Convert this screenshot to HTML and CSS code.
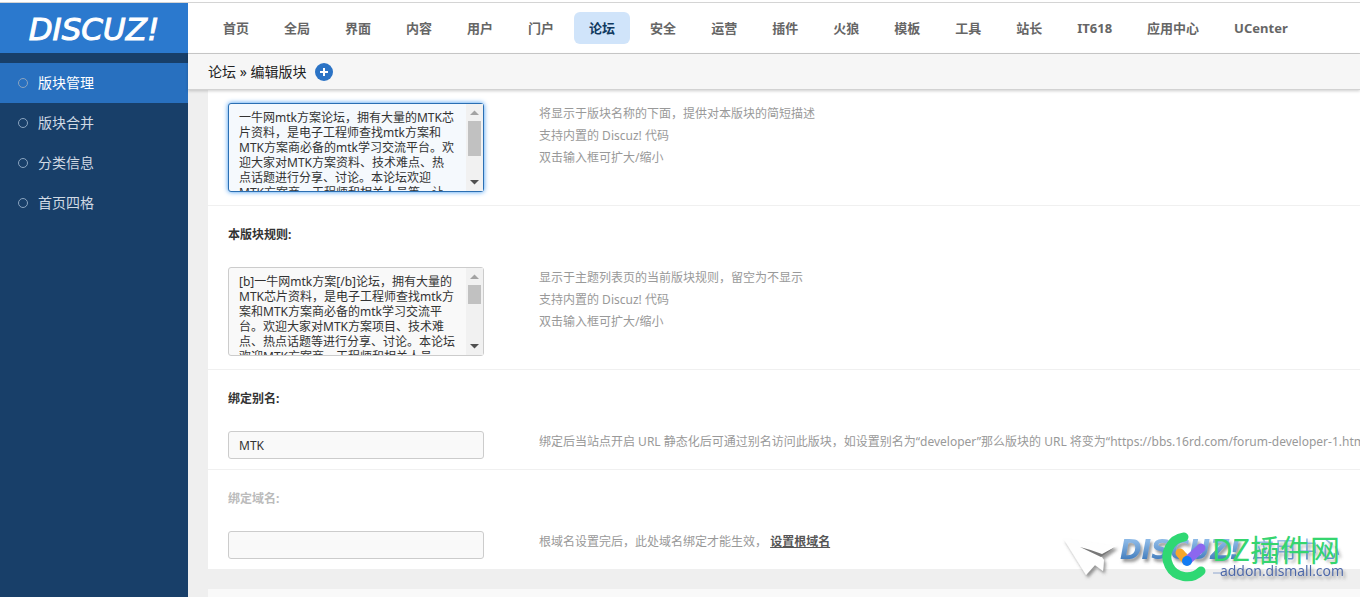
FILE: index.html
```html
<!DOCTYPE html>
<html lang="zh-CN">
<head>
<meta charset="utf-8">
<meta name="viewport" content="width=device-width, initial-scale=1">
<title>论坛 - 编辑版块</title>
<link rel="stylesheet" href="styles.css">
</head>
<body>
<div class="app">
  <aside class="sidebar">
    <a class="logo" href="#">DISCUZ!</a>
    <nav class="side-menu" aria-label="版块">
      <a class="side-link side-link-active" href="#">版块管理</a>
      <a class="side-link" href="#">版块合并</a>
      <a class="side-link" href="#">分类信息</a>
      <a class="side-link" href="#">首页四格</a>
    </nav>
  </aside>
  <div class="main">
    <nav class="top-nav" aria-label="主导航">
      <a class="top-link" href="#">首页</a>
      <a class="top-link" href="#">全局</a>
      <a class="top-link" href="#">界面</a>
      <a class="top-link" href="#">内容</a>
      <a class="top-link" href="#">用户</a>
      <a class="top-link" href="#">门户</a>
      <a class="top-link top-link-active" href="#">论坛</a>
      <a class="top-link" href="#">安全</a>
      <a class="top-link" href="#">运营</a>
      <a class="top-link" href="#">插件</a>
      <a class="top-link" href="#">火狼</a>
      <a class="top-link" href="#">模板</a>
      <a class="top-link" href="#">工具</a>
      <a class="top-link" href="#">站长</a>
      <a class="top-link" href="#">IT618</a>
      <a class="top-link" href="#">应用中心</a>
      <a class="top-link" href="#">UCenter</a>
    </nav>
    <div class="crumbs">
      <span>论坛 » 编辑版块</span>
      <button class="add" type="button" aria-label="添加到常用操作">
        <svg width="18" height="18" viewBox="0 0 18 18" aria-hidden="true"><circle cx="9" cy="9" r="9" fill="#2b73c5"/><path d="M9 5v8M5 9h8" stroke="#fff" stroke-width="2"/></svg>
      </button>
    </div>
    <main class="content">
      <form class="panel">
        <div class="row row-first">
          <div class="fields">
            <div class="box area area-focus">
              <textarea class="area-text" aria-label="版块简介">一牛网mtk方案论坛，拥有大量的MTK芯片资料，是电子工程师查找mtk方案和MTK方案商必备的mtk学习交流平台。欢迎大家对MTK方案资料、技术难点、热
点话题进行分享、讨论。本论坛欢迎
MTK方案商、工程师和相关人员等，让
大家共同交流。</textarea>
              <div class="scrollbar" aria-hidden="true">
                <svg class="arrow arrow-up" viewBox="0 0 17 17"><path d="M4 11L8.500 6.500L13 11Z"/></svg>
                <div class="thumb thumb-long"></div>
                <svg class="arrow arrow-down" viewBox="0 0 17 17"><path d="M4 6L8.500 10.500L13 6Z"/></svg>
              </div>
            </div>
            <p class="tips">将显示于版块名称的下面，提供对本版块的简短描述<br>支持内置的 Discuz! 代码<br>双击输入框可扩大/缩小</p>
          </div>
        </div>
        <div class="row">
          <label class="label" for="rules">本版块规则:</label>
          <div class="fields">
            <div class="box area">
              <textarea class="area-text" id="rules">[b]一牛网mtk方案[/b]论坛，拥有大量的MTK芯片资料，是电子工程师查找mtk方案和MTK方案商必备的mtk学习交流平台。欢迎大家对MTK方案项目、技术难点、热点话题等进行分享、讨论。本论坛欢迎MTK方案商、工程师和相关人员。</textarea>
              <div class="scrollbar" aria-hidden="true">
                <svg class="arrow arrow-up" viewBox="0 0 17 17"><path d="M4 11L8.500 6.500L13 11Z"/></svg>
                <div class="thumb"></div>
                <svg class="arrow arrow-down" viewBox="0 0 17 17"><path d="M4 6L8.500 10.500L13 6Z"/></svg>
              </div>
            </div>
            <p class="tips">显示于主题列表页的当前版块规则，留空为不显示<br>支持内置的 Discuz! 代码<br>双击输入框可扩大/缩小</p>
          </div>
        </div>
        <div class="row">
          <label class="label" for="alias">绑定别名:</label>
          <div class="fields">
            <input class="box line" id="alias" type="text" value="MTK">
            <p class="tips">绑定后当站点开启 URL 静态化后可通过别名访问此版块，如设置别名为“developer”那么版块的 URL 将变为“https://bbs.16rd.com/forum-developer-1.html”</p>
          </div>
        </div>
        <div class="row">
          <label class="label label-muted" for="domain">绑定域名:</label>
          <div class="fields">
            <input class="box line" id="domain" type="text">
            <p class="tips">根域名设置完后，此处域名绑定才能生效， <a class="tip-link" href="#">设置根域名</a></p>
          </div>
        </div>
      </form>
      <div class="panel-next"></div>
    </main>
  </div>
  <svg class="watermark" width="310" height="77" viewBox="0 0 310 77" role="img" aria-label="DZ插件网 addon.dismall.com">
    <defs>
      <linearGradient id="blue" x1="0" y1="0" x2="0" y2="1"><stop offset="0.2" stop-color="#8bb8e6"/><stop offset="0.9" stop-color="#3a76b8"/></linearGradient>
      <filter id="shade" x="-10%" y="-20%" width="125%" height="160%"><feDropShadow dx="2" dy="3" stdDeviation="1.5" flood-color="#555" flood-opacity="0.6"/></filter>
    </defs>
    <g filter="url(#shade)">
      <path fill="#fefefe" d="M13 18L66 26L51 36L54 40L53 51L45 45L36 55Z"/>
      <path d="M30 27Q42 30 52 34L65 27L51 37Z" fill="#777"/>
      <text class="wm-disc" x="70" y="39" fill="url(#blue)">DISCUZ!</text>
      <text class="wm-app" x="202" y="37" fill="url(#blue)">应用中心</text>
    </g>
    <path d="M134 17A20 20 0 1 0 151 51" fill="none" stroke="#2fd873" stroke-width="9" stroke-linecap="round"/>
    <path d="M130 33L137 41" stroke="#f7a72b" stroke-width="9" stroke-linecap="round"/>
    <path d="M138 40L151 28" stroke="#8c67ef" stroke-width="9" stroke-linecap="round"/>
    <circle cx="137" cy="41" r="5" fill="#147bf2"/>
    <text class="wm-name" x="162" y="41">DZ插件网</text>
    <path d="M163 53H171" stroke="#8ea6cf"/>
    <text class="wm-url" x="170" y="56" filter="url(#shade)">addon.dismall.com</text>
  </svg>
</div>
</body>
</html>
```
FILE: styles.css
```css
*,
*::before {
  box-sizing: border-box;
}

body {
  margin: 0;
  background: #efefef;
  color: #333;
  font: 12px/22px "Noto Sans", "Noto Sans CJK SC", sans-serif;
}

a {
  color: inherit;
  text-decoration: none;
}

.app {
  position: relative;
  display: flex;
  height: 100vh;
  padding-top: 3px;
  overflow: hidden;
  background: linear-gradient(#fff 2px, #d4d4d4 2px, #d4d4d4 3px, #efefef 3px);
}

/* Sidebar */
.sidebar {
  flex: 0 0 188px;
  background: #183f69;
}

.logo {
  display: flex;
  align-items: center;
  justify-content: center;
  height: 50px;
  padding-top: 3px;
  background: #2b79ce;
  color: #fff;
  font: italic 400 31px/47px "DejaVu Sans", sans-serif;
  -webkit-text-stroke: 1px #fff;
}

.side-menu {
  padding-top: 10px;
}

.side-link {
  display: flex;
  align-items: center;
  gap: 10px;
  height: 40px;
  padding-left: 18px;
  color: #d1dae4;
  font-size: 14px;
}

.side-link::before {
  content: "";
  width: 10px;
  height: 10px;
  border: 1px solid #8aa4bf;
  border-radius: 50%;
}

.side-link-active {
  background: #2870bf;
  color: #fff;
}

/* Header */
.main {
  display: flex;
  flex: 1;
  flex-direction: column;
  min-width: 0;
}

.top-nav {
  display: flex;
  flex: none;
  align-items: center;
  gap: 5px;
  height: 51px;
  padding-left: 20px;
  border-bottom: 1px solid #ccc;
  background: #fff;
}

.top-link {
  padding: 0 15px;
  border-radius: 6px;
  color: #666;
  font-size: 13px;
  font-weight: 700;
  line-height: 32px;
  white-space: nowrap;
}

.top-link-active {
  background: #d0e4fa;
  color: #11395f;
}

.crumbs {
  z-index: 1;
  display: flex;
  flex: none;
  align-items: center;
  gap: 9px;
  height: 36px;
  padding-left: 20px;
  border-bottom: 1px solid #d2d2d2;
  background: #f6f6f6;
  box-shadow: 0 1px 3px rgba(0, 0, 0, 0.2);
  color: #222;
  font-size: 14px;
}

.add {
  display: flex;
  padding: 0;
  border: 0;
  background: none;
}

/* Form */
.content {
  display: flex;
  flex: 1;
  flex-direction: column;
  gap: 20px;
  min-height: 0;
  padding-left: 20px;
}

.panel {
  flex: none;
  background: #fff;
}

.panel-next {
  flex: 1;
  background: #f9f9f9;
}

.row {
  padding: 0 0 10px 20px;
  border-bottom: 1px solid #f0f0f0;
}

.row:last-child {
  border-bottom: 0;
}

.row-first {
  padding-top: 13px;
}

.label {
  display: block;
  padding: 18px 0 21px;
  font-weight: 700;
}

.label-muted {
  color: #bbb;
}

.fields {
  display: grid;
  grid-template-columns: 256px 1fr;
  gap: 55px;
}

.box {
  width: 100%;
  border: 1px solid #ccc;
  border-radius: 3px;
  background: #f9f9f9;
  color: #333;
  font: inherit;
}

.line {
  height: 28px;
  padding: 0 10px;
  outline: 0;
}

.area {
  display: flex;
  height: 89px;
  margin-bottom: 3px;
}

.area-focus {
  border-color: #2b6fb3;
  background: #f5f9fd;
  box-shadow: 0 0 5px #3d97f0;
}

.area-text {
  flex: 1;
  min-width: 0;
  margin: 0;
  padding: 6px 10px 0;
  border: 0;
  outline: 0;
  background: none;
  color: inherit;
  font: inherit;
  line-height: 15px;
  overflow: hidden;
  resize: none;
}

.scrollbar {
  display: flex;
  flex: 0 0 17px;
  flex-direction: column;
  background: #f1f1f1;
}

.arrow {
  flex: none;
  width: 17px;
  height: 17px;
}

.arrow-up {
  fill: #a3a3a3;
}

.arrow-down {
  margin-top: auto;
  fill: #505050;
}

.thumb {
  height: 19px;
  margin: 0 2px;
  background: #c1c1c1;
}

.thumb-long {
  height: 35px;
}

.tips {
  min-width: 0;
  margin: 0;
  overflow: hidden;
  color: #999;
  white-space: nowrap;
}

.tip-link {
  color: #555;
  font-weight: 700;
  text-decoration: underline;
}

/* Site mark over the lower right corner */
.watermark {
  position: absolute;
  right: 0;
  bottom: 0;
  z-index: 2;
  pointer-events: none;
}

.wm-disc {
  font: italic 700 26px "DejaVu Sans", sans-serif;
}

.wm-app {
  font: 400 22px "Noto Sans CJK SC", sans-serif;
  opacity: 0.8;
}

.wm-name {
  fill: #35d56f;
  font: 400 30px "Noto Sans CJK SC", sans-serif;
}

.wm-url {
  fill: #4a66a8;
  font: 14px "Open Sans", sans-serif;
}
```
